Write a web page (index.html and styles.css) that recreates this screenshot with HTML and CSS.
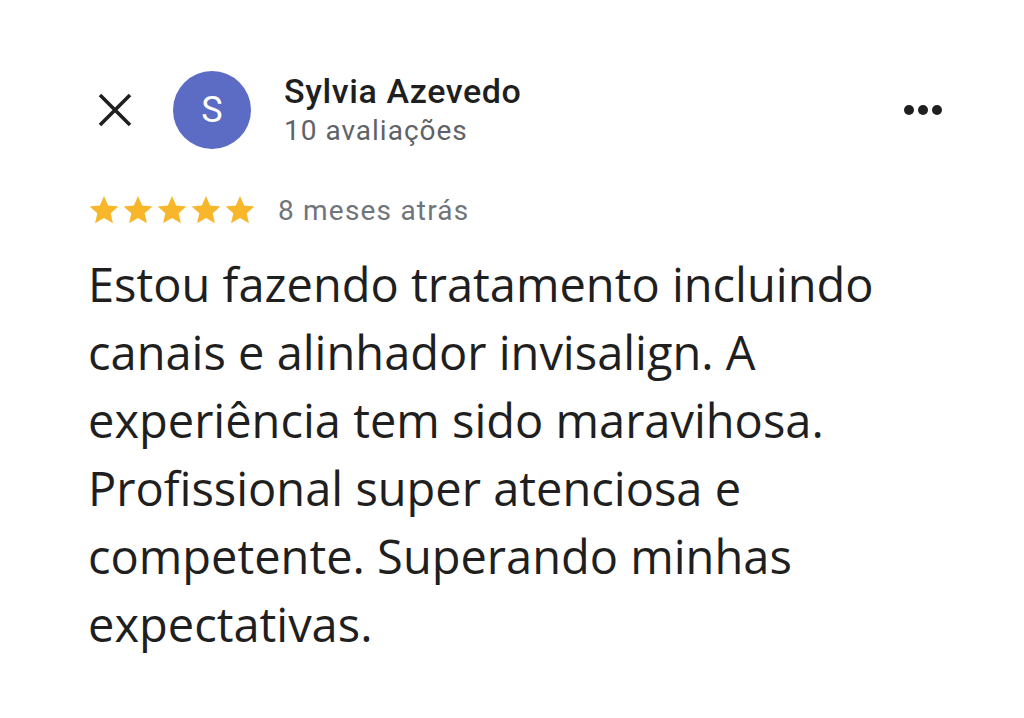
FILE: index.html
```html
<!DOCTYPE html>
<html lang="pt">
<head>
<meta charset="utf-8">
<link rel="stylesheet" href="styles.css">
</head>
<body>
<div class="review">
  <div class="header">
    <svg class="close" viewBox="0 0 34 34" width="34" height="34"><path d="M2 2 L32 32 M32 2 L2 32" stroke="#1f1f1f" stroke-width="3.6" fill="none"/></svg>
    <div class="avatar">S</div>
    <div class="who">
      <div class="name">Sylvia Azevedo</div>
      <div class="count">10 avaliações</div>
    </div>
    <div class="more"><span></span><span></span><span></span></div>
  </div>
  <div class="meta">
    <div class="stars">
      <svg viewBox="0 0 24 24" width="32" height="32"><path d="M12 1.5l3.1 7.1 7.7.7-5.8 5.1 1.7 7.6L12 18l-6.7 4 1.7-7.6-5.8-5.1 7.7-.7z" fill="#f8b72a"/></svg>
      <svg viewBox="0 0 24 24" width="32" height="32"><path d="M12 1.5l3.1 7.1 7.7.7-5.8 5.1 1.7 7.6L12 18l-6.7 4 1.7-7.6-5.8-5.1 7.7-.7z" fill="#f8b72a"/></svg>
      <svg viewBox="0 0 24 24" width="32" height="32"><path d="M12 1.5l3.1 7.1 7.7.7-5.8 5.1 1.7 7.6L12 18l-6.7 4 1.7-7.6-5.8-5.1 7.7-.7z" fill="#f8b72a"/></svg>
      <svg viewBox="0 0 24 24" width="32" height="32"><path d="M12 1.5l3.1 7.1 7.7.7-5.8 5.1 1.7 7.6L12 18l-6.7 4 1.7-7.6-5.8-5.1 7.7-.7z" fill="#f8b72a"/></svg>
      <svg viewBox="0 0 24 24" width="32" height="32"><path d="M12 1.5l3.1 7.1 7.7.7-5.8 5.1 1.7 7.6L12 18l-6.7 4 1.7-7.6-5.8-5.1 7.7-.7z" fill="#f8b72a"/></svg>
    </div>
    <span class="when">8 meses atrás</span>
  </div>
  <p class="text">Estou fazendo tratamento incluindo canais e alinhador invisalign. A experiência tem sido maravihosa. Profissional super atenciosa e competente. Superando minhas expectativas.</p>
</div>
</body>
</html>
```
FILE: styles.css
```css
html, body {
  margin: 0;
  padding: 0;
  background: #ffffff;
}
body {
  width: 1024px;
  height: 718px;
  overflow: hidden;
  font-family: "Open Sans", "Liberation Sans", sans-serif;
}
.review {
  padding: 70px 0 0 88px;
}
.header {
  display: flex;
  align-items: center;
  height: 80px;
}
.close {
  width: 34px;
  height: 34px;
  margin-left: 10px;
}
.avatar {
  width: 78px;
  height: 78px;
  border-radius: 50%;
  background: #5c6bc4;
  color: #fff;
  display: flex;
  align-items: center;
  justify-content: center;
  font-family: "Roboto", "Liberation Sans", sans-serif;
  font-size: 36px;
  margin-left: 41px;
}
.who {
  margin-left: 33px;
  display: flex;
  flex-direction: column;
  gap: 4px;
  margin-top: 0;
}
.name {
  font-family: "Roboto", "Liberation Sans", sans-serif;
  font-size: 34px;
  font-weight: 500;
  color: #1f1f1f;
  line-height: 38px;
  letter-spacing: 0.6px;
}
.count {
  font-family: "Roboto", "Liberation Sans", sans-serif;
  font-size: 28px;
  color: #5f6368;
  line-height: 34px;
  letter-spacing: 1px;
}
.more {
  margin-left: auto;
  margin-right: 82px;
  display: flex;
  gap: 4px;
  margin-top: 0;
}
.more span {
  width: 10px;
  height: 10px;
  border-radius: 50%;
  background: #1f1f1f;
}
.meta {
  display: flex;
  align-items: center;
  margin-top: 40px;
  height: 40px;
}
.stars {
  display: flex;
  gap: 2px;
}
.when {
  margin-left: 22px;
  font-family: "Roboto", "Liberation Sans", sans-serif;
  font-size: 28px;
  color: #70757a;
  letter-spacing: 1.2px;
}
.text {
  margin: 20px 0 0 0;
  width: 820px;
  font-size: 47px;
  line-height: 68px;
  color: #1f1f1f;
}
```
